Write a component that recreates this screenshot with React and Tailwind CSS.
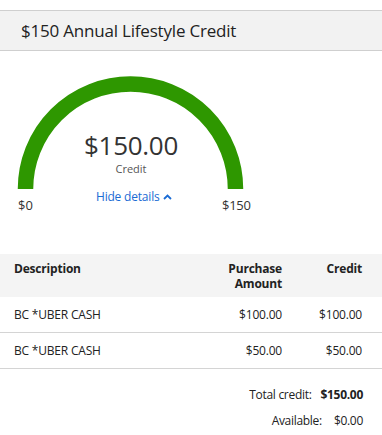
import React from 'react';

const rows = [
  { desc: 'BC *UBER CASH', amount: '$100.00', credit: '$100.00' },
  { desc: 'BC *UBER CASH', amount: '$50.00', credit: '$50.00' },
];

const Gauge = () => (
  <div className="relative w-[262px] h-[163px]">
    <svg width="262" height="163" viewBox="0 0 262 163" className="absolute left-0 top-0">
      <path d="M 25.5 138 A 105 105 0 0 1 235.5 138" fill="none" stroke="#2e9700" strokeWidth="15.5" />
    </svg>
    <div className="absolute left-0 top-[80px] w-[262px] flex flex-col items-center">
      <div className="text-[26px] leading-[28px] text-[#333] tracking-[-0.3px]">$150.00</div>
      <div className="text-[11px] leading-[13px] text-[#555] mt-[3px]">Credit</div>
    </div>
    <button className="absolute left-[96px] top-[138px] flex items-center gap-[4px] text-[12px] leading-[16px] text-[#1a6bd4] tracking-[-0.2px]">
      Hide details
      <svg width="9" height="6" viewBox="0 0 9 6">
        <path d="M1 5 L4.5 1.5 L8 5" fill="none" stroke="#1a6bd4" strokeWidth="1.8" />
      </svg>
    </button>
    <div className="absolute left-[18px] top-[146px] text-[13px] leading-[16px] text-[#333]">$0</div>
    <div className="absolute left-[222px] top-[146px] text-[13px] leading-[16px] text-[#333] tracking-[-0.3px]">$150</div>
  </div>
);

export default function App() {
  return (
    <div className="w-[382px] h-[435px] bg-white overflow-hidden" style={{ fontFamily: '"Open Sans", "Liberation Sans", sans-serif' }}>
      <div className="mt-[10px] h-[41px] border-y border-[#cfcfcf] bg-[#f2f2f2] flex items-center px-[21px]">
        <h1 className="text-[17px] tracking-[-0.2px] text-[#222] font-normal">$150 Annual Lifestyle Credit</h1>
      </div>

      <Gauge />

      <div className="mt-[40px]">
        <div className="h-[43px] bg-[#f4f4f4] flex items-start pt-[8px] px-[14px] pr-[20px] text-[12px] leading-[14px] font-bold text-[#222] tracking-[-0.2px]">
          <div className="flex-1">Description</div>
          <div className="w-[80px] text-right flex flex-col gap-[1px]">
            <span>Purchase</span>
            <span>Amount</span>
          </div>
          <div className="w-[80px] text-right">Credit</div>
        </div>
        {rows.map((r, i) => (
          <div key={i} className="h-[36px] border-b border-[#d4d4d4] flex items-center px-[14px] pr-[20px] text-[12px] text-[#222] tracking-[-0.2px]">
            <div className="flex-1">{r.desc}</div>
            <div className="w-[80px] text-right">{r.amount}</div>
            <div className="w-[80px] text-right">{r.credit}</div>
          </div>
        ))}
        <div className="pt-[17px] pr-[19px] flex flex-col items-end gap-[8px] text-[12px] text-[#222] tracking-[-0.3px]">
          <div className="flex items-center gap-[9px]">
            <span>Total credit:</span>
            <span className="font-bold">$150.00</span>
          </div>
          <div className="flex items-center gap-[12px]">
            <span>Available:</span>
            <span>$0.00</span>
          </div>
        </div>
      </div>
    </div>
  );
}
